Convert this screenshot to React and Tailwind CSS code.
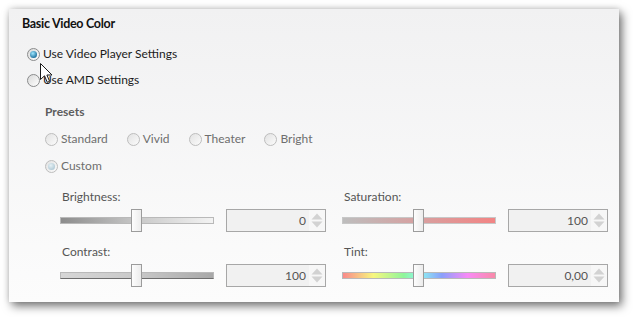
import React from "react";

const font = { fontFamily: "Lato, 'Noto Sans', sans-serif" };

function Radio({ checked = false, disabled = false }) {
  const ring = disabled ? "border-[#bdbdbd]" : "border-[#8a8b8c]";
  const fill = disabled
    ? "bg-[linear-gradient(135deg,#e2e2e2,#fbfbfb)]"
    : "bg-[linear-gradient(135deg,#d9d9d9,#ffffff)]";
  return (
    <span className={`flex h-[13px] w-[13px] shrink-0 items-center justify-center rounded-full border ${ring} ${fill}`}>
      {checked && (
        <span
          className={`h-[7px] w-[7px] rounded-full ${
            disabled
              ? "bg-[radial-gradient(circle_at_40%_35%,#e6f1f5,#9fbccb)]"
              : "bg-[radial-gradient(circle_at_40%_35%,#9fe7ff,#1c6f9c_75%)]"
          }`}
        />
      )}
    </span>
  );
}

function Option({ label, checked, disabled, className = "" }) {
  return (
    <div className={`flex h-5 items-center gap-[3px] ${className}`}>
      <Radio checked={checked} disabled={disabled} />
      <span className={`text-[12px] leading-none ${disabled ? "text-[#6e6e6e]" : "text-[#1b1b1b]"}`}>{label}</span>
    </div>
  );
}

function Spin({ value }) {
  return (
    <div className="flex h-full w-[100px] items-stretch border border-[#a7a7a7] bg-[#f1f1f1]">
      <span className="flex flex-1 items-center justify-end pr-[3px] text-[12px] leading-none text-[#555]">{value}</span>
      <span className="flex w-[16px] flex-col items-center justify-center gap-[1px] bg-[#f7f7f7]">
        <svg width="12" height="7" viewBox="0 0 12 7"><path d="M6 0.5 L11.5 6.5 H0.5 Z" fill="#d2d2d2" /></svg>
        <svg width="12" height="7" viewBox="0 0 12 7"><path d="M0.5 0.5 H11.5 L6 6.5 Z" fill="#d2d2d2" /></svg>
      </span>
    </div>
  );
}

function SliderField({ label, track, thumbAt, value, top }) {
  return (
    <div className={`flex flex-col ${top ? "" : "mt-[12px]"}`}>
      <div className="flex h-4 items-center pl-[2px] text-[12px] leading-none text-[#555]">{label}</div>
      <div className="mt-[4px] flex h-[23px] items-center gap-[12px]">
        <div className="relative h-full w-[154px]">
          <div className="absolute inset-x-0 top-[8px] h-[7px]">
            <div className={`h-full w-full border border-[#b9b9b9] ${track}`} />
          </div>
          <div
            className="absolute top-0 h-[23px] w-[11px] border border-[#9c9c9c] bg-[linear-gradient(90deg,#fdfdfd,#ececec)]"
            style={{ left: thumbAt }}
          />
        </div>
        <Spin value={value} />
      </div>
    </div>
  );
}

function Cursor() {
  return (
    <svg className="absolute left-[40px] top-[63px]" width="13" height="21" viewBox="0 0 13 21">
      <path
        d="M0.5 0.5 L0.5 16.5 L4.5 12.8 L7.3 19.3 L9.6 18.3 L6.9 12 L12 12 Z"
        fill="#ffffff"
        stroke="#1b1b1b"
        strokeWidth="1"
        strokeLinejoin="round"
      />
    </svg>
  );
}

export default function App() {
  return (
    <div className="relative h-[317px] w-[633px] bg-white" style={font}>
      <div className="pl-[9px] pt-[9px]">
        <div className="flex h-[293px] w-[610px] flex-col bg-[linear-gradient(180deg,#f1f1f2,#fcfcfc)] pl-[13px] pt-[7px] shadow-[3px_4px_9px_rgba(0,0,0,0.55),0_-1px_6px_rgba(0,0,0,0.12)]">
          <div className="flex h-4 items-center text-[12.5px] font-bold leading-none tracking-[-0.3px] text-[#111]">Basic Video Color</div>

          <div className="pl-[5px]">
            <Option label="Use Video Player Settings" checked className="mt-[12px]" />
            <Option label="Use AMD Settings" className="mt-[6px]" />
          </div>

          <div className="pl-[23px]">
            <div className="mt-[14px] flex h-4 items-center text-[12px] font-bold leading-none text-[#5d5d5d]">Presets</div>
            <div className="mt-[9px] flex gap-[19px]">
              <Option label="Standard" disabled />
              <Option label="Vivid" disabled />
              <Option label="Theater" disabled />
              <Option label="Bright" disabled />
            </div>
            <Option label="Custom" checked disabled className="mt-[7px]" />

            <div className="mt-[13px] grid grid-cols-[282px_266px] pl-[15px]">
              <SliderField
                label="Brightness:"
                top
                track="bg-[linear-gradient(90deg,#8c8c8c,#c8c8c8_50%,#f3f3f3)]"
                thumbAt={71}
                value="0"
              />
              <SliderField
                label="Saturation:"
                top
                track="bg-[linear-gradient(90deg,#bdbdbd,#d7a0a0_50%,#f28484)] border-[#c7c7c7]"
                thumbAt={71}
                value="100"
              />
              <SliderField
                label="Contrast:"
                track="bg-[linear-gradient(90deg,#d6d6d6,#c9c9c9_50%,#a8a8a8)] border-b-[#6e6e6e]"
                thumbAt={71}
                value="100"
              />
              <SliderField
                label="Tint:"
                track="bg-[linear-gradient(90deg,#f98a8a,#f7f77f_20%,#8ff59a_40%,#8ef7f0_50%,#8aa0fb_65%,#f88af6_82%,#f98aa8)]"
                thumbAt={71}
                value="0,00"
              />
            </div>
          </div>
        </div>
      </div>
      <Cursor />
    </div>
  );
}
